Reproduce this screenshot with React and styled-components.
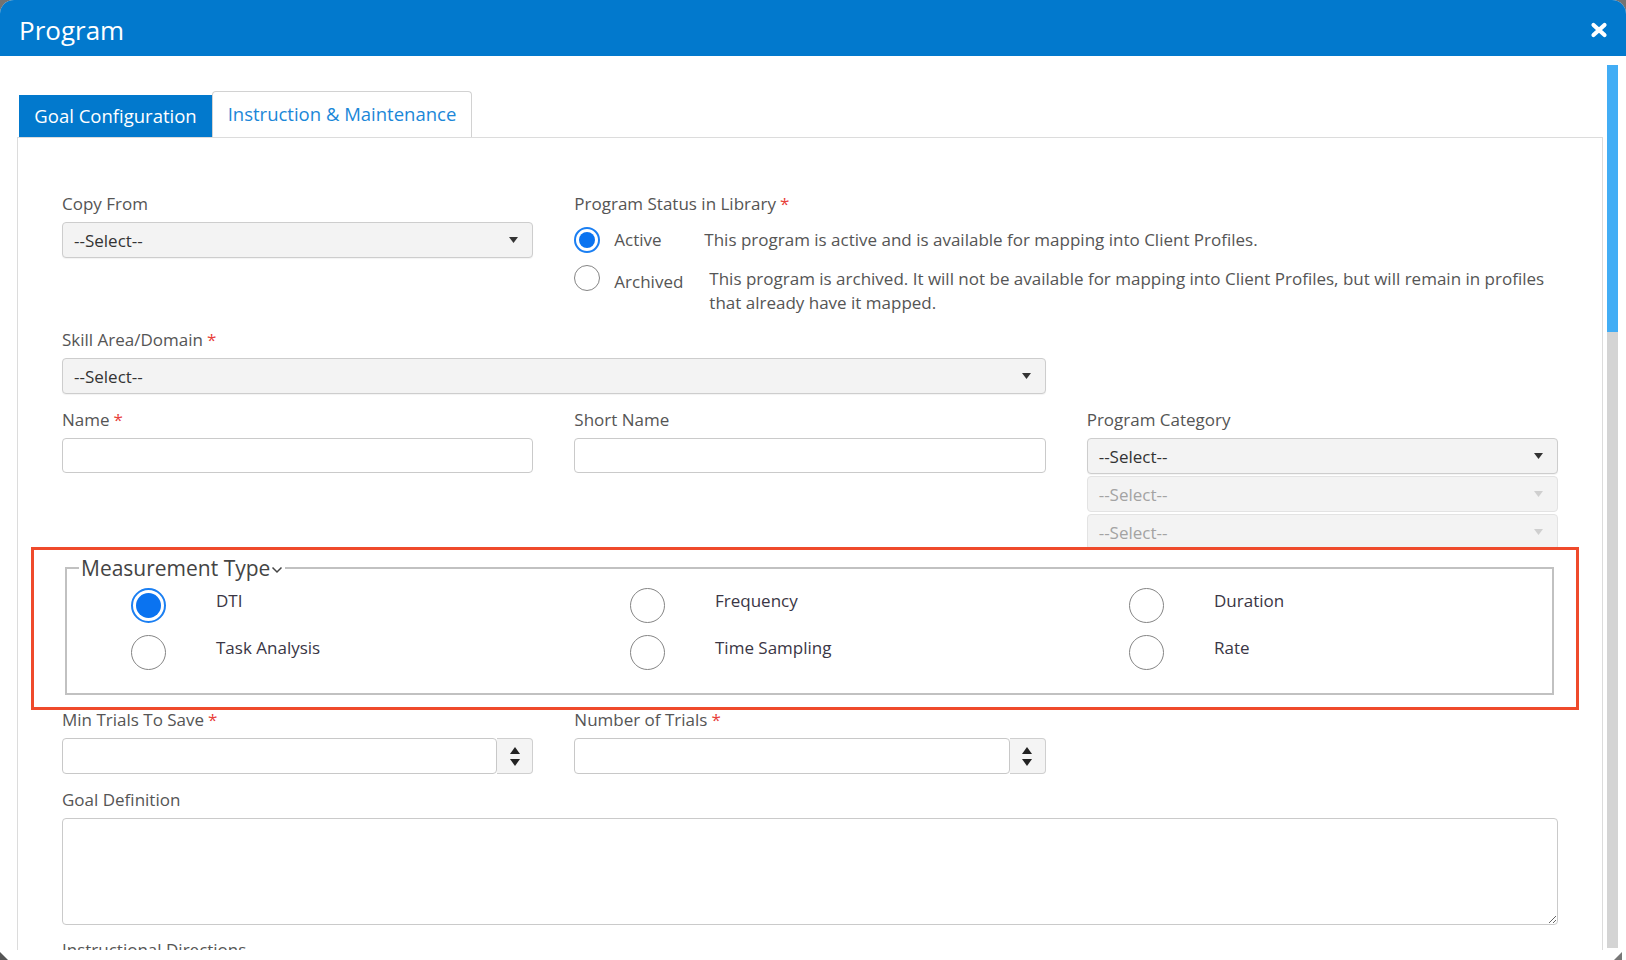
import React from 'react';
import styled, { createGlobalStyle } from 'styled-components';

const GlobalStyle = createGlobalStyle`
  html, body { margin: 0; padding: 0; }
  body {
    background: #727272;
    font-family: "Open Sans", "Noto Sans", sans-serif;
    overflow: hidden;
  }
  * { box-sizing: border-box; }
`;

const Modal = styled.div`
  position: relative;
  width: 1626px;
  height: 960px;
  background: #fff;
  border-radius: 14px 14px 0 0;
  overflow: hidden;
  display: flex;
  flex-direction: column;
`;

const Header = styled.header`
  flex: none;
  height: 56px;
  background: #0279cd;
  display: flex;
  align-items: center;
  justify-content: space-between;
  padding: 3px 18px 0 19px;
`;

const Title = styled.h1`
  margin: 0;
  font-size: 26px;
  font-weight: 400;
  line-height: 1;
  color: #fff;
`;

const CloseButton = styled.button`
  width: 18px;
  height: 16px;
  padding: 0;
  border: 0;
  background: none;
  display: flex;
  cursor: pointer;
`;

const Body = styled.div`
  flex: none;
  height: 894px;
  display: flex;
`;

const Main = styled.div`
  flex: 1;
  min-width: 0;
  padding: 35px 0 0 17px;
  overflow: hidden;
  display: flex;
  flex-direction: column;
`;

const ScrollColumn = styled.div`
  flex: none;
  width: 23px;
  padding: 9px 8px 2px 4px;
  display: flex;
`;

const ScrollTrack = styled.div`
  flex: 1;
  background: #d4d4d4;
  display: flex;
  flex-direction: column;
`;

const ScrollThumb = styled.div`
  height: 267px;
  background: #42adf5;
`;

const Tabs = styled.div`
  flex: none;
  height: 46px;
  display: flex;
  align-items: flex-end;
  padding-left: 2px;
`;

const Tab = styled.div`
  display: flex;
  align-items: center;
  justify-content: center;
  font-size: 18.5px;
  white-space: nowrap;
  ${(p) =>
    p.$active
      ? `
    width: 193px;
    height: 42px;
    background: #0279cd;
    color: #fff;
    padding-bottom: 2px;
  `
      : `
    width: 260px;
    height: 46px;
    border: 1px solid #d2d2d2;
    border-bottom: 0;
    border-radius: 4px 4px 0 0;
    color: #1b87d8;
    background: #fff;
    padding-bottom: 2px;
  `}
`;

const Panel = styled.div`
  flex: 1;
  border: 1px solid #dcdcdc;
  border-bottom: 0;
  padding: 54px 44px 0 44px;
`;

const Row = styled.div`
  display: grid;
  grid-template-columns: repeat(3, 1fr);
  column-gap: 41px;
  margin-top: ${(p) => p.$top || 0}px;
`;

const Field = styled.div`
  display: flex;
  flex-direction: column;
  min-width: 0;
  grid-column: ${(p) => (p.$span ? `span ${p.$span}` : 'auto')};
`;

const Label = styled.div`
  font-size: 17px;
  line-height: 24px;
  color: #555;
  margin-bottom: 6px;
  white-space: nowrap;
`;

const Required = styled.span`
  color: #e8403a;
  margin-left: 4px;
`;

const SelectBox = styled.div`
  height: 36px;
  display: flex;
  align-items: center;
  justify-content: space-between;
  padding: 0 14px 0 11px;
  background: #f3f3f3;
  border: 1px solid ${(p) => (p.$disabled ? '#e3e3e3' : '#cdcdcd')};
  border-radius: 4px;
  font-size: 17px;
  color: ${(p) => (p.$disabled ? '#a3a3a3' : '#333')};
  box-shadow: ${(p) => (p.$disabled ? 'none' : '0 1px 1px rgba(0,0,0,0.05)')};
`;

const SelectStack = styled.div`
  display: flex;
  flex-direction: column;
  gap: 2px;
`;

const TextInput = styled.div`
  height: 35px;
  border: 1px solid #cacaca;
  border-radius: 4px;
  background: #fff;
`;

const NumberBox = styled.div`
  height: 36px;
  display: flex;
`;

const NumberInput = styled.div`
  flex: 1;
  border: 1px solid #c8c8c8;
  border-radius: 4px;
  background: #fff;
`;

const Spinner = styled.div`
  width: 36px;
  border: 1px solid #cfcfcf;
  border-left: 0;
  border-radius: 0 4px 4px 0;
  background: #f4f4f4;
  display: flex;
  flex-direction: column;
  align-items: center;
  justify-content: center;
  gap: 5px;
`;

const TextArea = styled.textarea`
  display: block;
  width: 100%;
  height: 107px;
  border: 1px solid #cacaca;
  border-radius: 4px;
  background: #fff;
  resize: both;
  font: inherit;
  outline: none;
`;

const StatusList = styled.div`
  display: flex;
  flex-direction: column;
  gap: 7px;
`;

const StatusOption = styled.div`
  display: flex;
  align-items: ${(p) => (p.$top ? 'flex-start' : 'center')};
  min-height: ${(p) => (p.$top ? 'auto' : '36px')};
`;

const Radio = styled.span`
  flex: none;
  position: relative;
  width: ${(p) => p.$size}px;
  height: ${(p) => p.$size}px;
  border-radius: 50%;
  border: ${(p) => (p.$checked ? '2px solid #1b7ff2' : '1.5px solid #858585')};
  background: #fff;
  &::after {
    content: '';
    display: ${(p) => (p.$checked ? 'block' : 'none')};
    position: absolute;
    inset: 3px;
    border-radius: 50%;
    background: #0a73f0;
  }
`;

const OptionName = styled.span`
  flex: none;
  min-width: 64px;
  margin: ${(p) => (p.$top ? '5px' : '0')} 26px 0 14px;
  font-size: 17px;
  line-height: 24px;
  color: #555;
`;

const OptionDesc = styled.span`
  flex: 1;
  margin-top: ${(p) => (p.$top ? '2px' : '0')};
  font-size: 17px;
  line-height: 24px;
  color: #555;
`;

const Fieldset = styled.fieldset`
  margin: 4px 4px 0 3px;
  padding: 6px 0 23px 12px;
  border: 2px solid #c1c1c1;
  min-width: 0;
`;

const Legend = styled.legend`
  padding: 0 2px;
  font-size: 21px;
  line-height: 28px;
  color: #444;
`;

const MeasureGrid = styled.div`
  display: grid;
  grid-template-columns: 499px 499px 1fr;
  row-gap: 12px;
  padding-left: 52px;
`;

const MeasureOption = styled.div`
  display: flex;
  align-items: flex-start;
  gap: 50px;
`;

const MeasureLabel = styled.span`
  margin-top: 1px;
  font-size: 17px;
  line-height: 24px;
  color: #3a3645;
`;

const Footer = styled.div`
  flex: none;
  height: 10px;
  display: flex;
  justify-content: space-between;
  align-items: flex-end;
`;

const Annotation = styled.div`
  position: absolute;
  left: 31px;
  top: 547px;
  width: 1548px;
  height: 163px;
  border: 3.5px solid #ef4a2b;
  pointer-events: none;
`;

const Caret = ({ color = '#333' }) => (
  <svg width="9" height="6" viewBox="0 0 9 6">
    <path d="M0 0 L9 0 L4.5 6 Z" fill={color} />
  </svg>
);

const Select = ({ disabled }) => (
  <SelectBox $disabled={disabled}>
    <span>--Select--</span>
    <Caret color={disabled ? '#cfcfcf' : '#333'} />
  </SelectBox>
);

const NumberField = () => (
  <NumberBox>
    <NumberInput />
    <Spinner>
      <svg width="10" height="7" viewBox="0 0 10 7">
        <path d="M5 0 L10 7 L0 7 Z" fill="#222" />
      </svg>
      <svg width="10" height="7" viewBox="0 0 10 7">
        <path d="M0 0 L10 0 L5 7 Z" fill="#222" />
      </svg>
    </Spinner>
  </NumberBox>
);

const measures = [
  { name: 'DTI', checked: true },
  { name: 'Frequency' },
  { name: 'Duration' },
  { name: 'Task Analysis' },
  { name: 'Time Sampling' },
  { name: 'Rate' },
];

export default function App() {
  return (
    <>
      <GlobalStyle />
      <Modal>
        <Header>
          <Title>Program</Title>
          <CloseButton aria-label="Close">
            <svg width="18" height="16" viewBox="0 0 18 16">
              <path
                d="M3.5 3 L14.5 13 M14.5 3 L3.5 13"
                stroke="#fff"
                strokeWidth="4.2"
                strokeLinecap="round"
              />
            </svg>
          </CloseButton>
        </Header>
        <Body>
          <Main>
            <Tabs>
              <Tab $active>Goal Configuration</Tab>
              <Tab>Instruction &amp; Maintenance</Tab>
            </Tabs>
            <Panel>
              <Row>
                <Field>
                  <Label>Copy From</Label>
                  <Select />
                </Field>
                <Field $span={2}>
                  <Label>
                    Program Status in Library<Required>*</Required>
                  </Label>
                  <StatusList>
                    <StatusOption>
                      <Radio $size={26} $checked />
                      <OptionName>Active</OptionName>
                      <OptionDesc>
                        This program is active and is available for mapping into Client Profiles.
                      </OptionDesc>
                    </StatusOption>
                    <StatusOption $top>
                      <Radio $size={26} />
                      <OptionName $top>Archived</OptionName>
                      <OptionDesc $top>
                        This program is archived. It will not be available for mapping into Client
                        Profiles, but will remain in profiles that already have it mapped.
                      </OptionDesc>
                    </StatusOption>
                  </StatusList>
                </Field>
              </Row>

              <Row $top={13}>
                <Field $span={2}>
                  <Label>
                    Skill Area/Domain<Required>*</Required>
                  </Label>
                  <Select />
                </Field>
              </Row>

              <Row $top={14}>
                <Field>
                  <Label>
                    Name<Required>*</Required>
                  </Label>
                  <TextInput />
                </Field>
                <Field>
                  <Label>Short Name</Label>
                  <TextInput />
                </Field>
                <Field>
                  <Label>Program Category</Label>
                  <SelectStack>
                    <Select />
                    <Select disabled />
                    <Select disabled />
                  </SelectStack>
                </Field>
              </Row>

              <Fieldset>
                <Legend>
                  Measurement Type
                  <svg width="12" height="8" viewBox="0 0 12 8" style={{ marginLeft: 1, verticalAlign: 2 }}>
                    <path d="M1.5 1.5 L6 6 L10.5 1.5" fill="none" stroke="#444" strokeWidth="1.5" />
                  </svg>
                </Legend>
                <MeasureGrid>
                  {measures.map((m) => (
                    <MeasureOption key={m.name}>
                      <Radio $size={35} $checked={m.checked} />
                      <MeasureLabel>{m.name}</MeasureLabel>
                    </MeasureOption>
                  ))}
                </MeasureGrid>
              </Fieldset>

              <Row $top={13}>
                <Field>
                  <Label>
                    Min Trials To Save<Required>*</Required>
                  </Label>
                  <NumberField />
                </Field>
                <Field>
                  <Label>
                    Number of Trials<Required>*</Required>
                  </Label>
                  <NumberField />
                </Field>
              </Row>

              <Row $top={14}>
                <Field $span={3}>
                  <Label>Goal Definition</Label>
                  <TextArea />
                </Field>
              </Row>

              <Row $top={13}>
                <Field $span={3}>
                  <Label>Instructional Directions</Label>
                </Field>
              </Row>
            </Panel>
          </Main>
          <ScrollColumn>
            <ScrollTrack>
              <ScrollThumb />
            </ScrollTrack>
          </ScrollColumn>
        </Body>
        <Footer>
          <svg width="8" height="8" viewBox="0 0 8 8">
            <path d="M0 0 L0 8 L8 8 Z" fill="#555" />
          </svg>
          <svg width="8" height="8" viewBox="0 0 8 8" style={{ marginRight: 4 }}>
            <path d="M8 0 L8 8 L0 8 Z" fill="#777" />
          </svg>
        </Footer>
        <Annotation />
      </Modal>
    </>
  );
}
